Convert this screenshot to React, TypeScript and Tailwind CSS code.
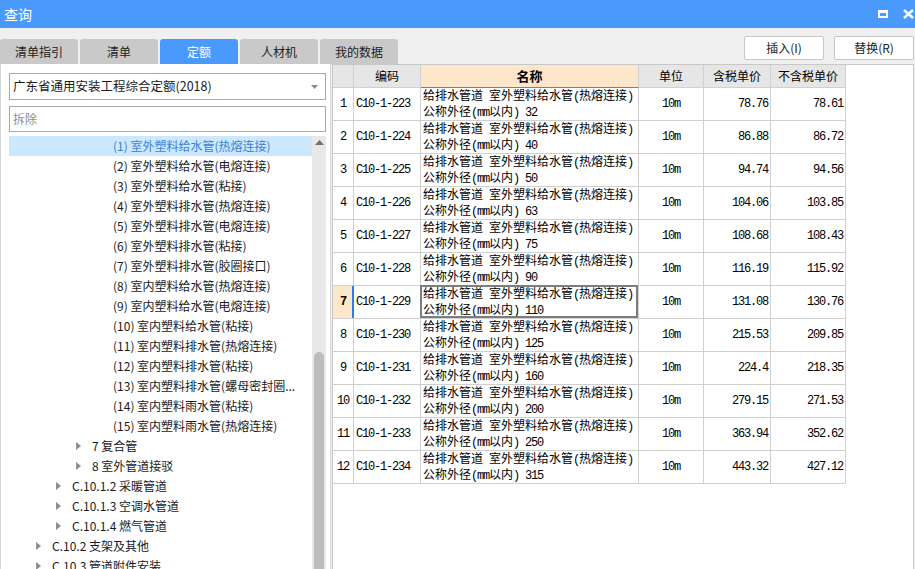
import React from "react";

const ui = "font-['Noto_Sans_CJK_SC',sans-serif]";
const mono = "font-['Liberation_Mono',monospace] tracking-[-1.2px]";

type Row = { code: string; size: string; tax: string; notax: string };

const rows: Row[] = [
  { code: "C10-1-223", size: "32", tax: "78.76", notax: "78.61" },
  { code: "C10-1-224", size: "40", tax: "86.88", notax: "86.72" },
  { code: "C10-1-225", size: "50", tax: "94.74", notax: "94.56" },
  { code: "C10-1-226", size: "63", tax: "104.06", notax: "103.85" },
  { code: "C10-1-227", size: "75", tax: "108.68", notax: "108.43" },
  { code: "C10-1-228", size: "90", tax: "116.19", notax: "115.92" },
  { code: "C10-1-229", size: "110", tax: "131.08", notax: "130.76" },
  { code: "C10-1-230", size: "125", tax: "215.53", notax: "209.85" },
  { code: "C10-1-231", size: "160", tax: "224.4", notax: "218.35" },
  { code: "C10-1-232", size: "200", tax: "279.15", notax: "271.53" },
  { code: "C10-1-233", size: "250", tax: "363.94", notax: "352.62" },
  { code: "C10-1-234", size: "315", tax: "443.32", notax: "427.12" },
];

type Node = { label: string; indent: string; arrow?: boolean };

const tree: Node[] = [
  { label: "(1) 室外塑料给水管(热熔连接)", indent: "pl-[104px]" },
  { label: "(2) 室外塑料给水管(电熔连接)", indent: "pl-[104px]" },
  { label: "(3) 室外塑料给水管(粘接)", indent: "pl-[104px]" },
  { label: "(4) 室外塑料排水管(热熔连接)", indent: "pl-[104px]" },
  { label: "(5) 室外塑料排水管(电熔连接)", indent: "pl-[104px]" },
  { label: "(6) 室外塑料排水管(粘接)", indent: "pl-[104px]" },
  { label: "(7) 室外塑料排水管(胶圈接口)", indent: "pl-[104px]" },
  { label: "(8) 室内塑料给水管(热熔连接)", indent: "pl-[104px]" },
  { label: "(9) 室内塑料给水管(电熔连接)", indent: "pl-[104px]" },
  { label: "(10) 室内塑料给水管(粘接)", indent: "pl-[104px]" },
  { label: "(11) 室内塑料排水管(热熔连接)", indent: "pl-[104px]" },
  { label: "(12) 室内塑料排水管(粘接)", indent: "pl-[104px]" },
  { label: "(13) 室内塑料排水管(螺母密封圈...", indent: "pl-[104px]" },
  { label: "(14) 室内塑料雨水管(粘接)", indent: "pl-[104px]" },
  { label: "(15) 室内塑料雨水管(热熔连接)", indent: "pl-[104px]" },
  { label: "7 复合管", indent: "pl-[67px]", arrow: true },
  { label: "8 室外管道接驳", indent: "pl-[67px]", arrow: true },
  { label: "C.10.1.2 采暖管道", indent: "pl-[47px]", arrow: true },
  { label: "C.10.1.3 空调水管道", indent: "pl-[47px]", arrow: true },
  { label: "C.10.1.4 燃气管道", indent: "pl-[47px]", arrow: true },
  { label: "C.10.2 支架及其他", indent: "pl-[27px]", arrow: true },
  { label: "C.10.3 管道附件安装", indent: "pl-[27px]", arrow: true },
];

const tabs = ["清单指引", "清单", "定额", "人材机", "我的数据"];

// ASCII runs get the narrow mono face, like the SimSun grid in the original
function Mixed({ text }: { text: string }) {
  const parts = text.split(/([\x00-\x7f]+)/).filter(Boolean);
  return (
    <>
      {parts.map((p, i) =>
        /^[\x00-\x7f]+$/.test(p) ? (
          <span key={i} className={`${mono} whitespace-pre`}>
            {p}
          </span>
        ) : (
          <span key={i}>{p}</span>
        )
      )}
    </>
  );
}

function Arrow() {
  return (
    <svg width="5" height="8" viewBox="0 0 5 8" className="shrink-0">
      <polygon points="0,0 5,4 0,8" fill="#8c8c8c" />
    </svg>
  );
}

export default function App() {
  return (
    <div className={`${ui} flex h-[569px] w-[915px] flex-col overflow-hidden bg-[#f0f0f0] text-[12px] text-[#1a1a1a]`}>
      {/* title bar */}
      <div className="flex h-[28px] shrink-0 items-center justify-between bg-[#4a9afd] pl-[4px] pr-[1px] text-white">
        <span className="text-[14px]">查询</span>
        <div className="flex items-center gap-[15px]">
          <div className="h-[8px] w-[10px] border-2 border-t-[3px] border-white" />
          <svg width="11" height="10" viewBox="0 0 11 10">
            <path d="M1 1 L10 9 M10 1 L1 9" stroke="white" strokeWidth="2.4" />
          </svg>
        </div>
      </div>

      {/* tabs + actions */}
      <div className="flex h-[36px] shrink-0 justify-between">
        <div className="flex items-end gap-[2px]">
          {tabs.map((t) => (
            <div
              key={t}
              className={`flex h-[25px] w-[78px] items-center justify-center rounded-t-[3px] ${
                t === "定额" ? "bg-[#4a9afd] text-white" : "bg-[#c9c9c9] text-[#222]"
              }`}
            >
              {t}
            </div>
          ))}
        </div>
        <div className="flex gap-[10px] pr-[1px] pt-[8px]">
          <button className="h-[24px] w-[80px] rounded-[2px] border border-[#c6c6c6] bg-white text-[#222]">插入(I)</button>
          <button className="h-[24px] w-[80px] rounded-[2px] border border-[#c6c6c6] bg-white text-[#222]">替换(R)</button>
        </div>
      </div>

      <div className="flex min-h-0 flex-1 gap-[1px]">
        {/* left panel */}
        <div className="flex w-[331px] shrink-0 flex-col border-x border-[#d6d6d6] bg-white pl-[8px] pr-[4px] pt-[9px]">
          <div className="flex h-[27px] items-center justify-between border border-[#a9a9a9] pl-[3px] pr-[7px]">
            <span className="text-[12.5px]">广东省通用安装工程综合定额(2018)</span>
            <svg width="7" height="4" viewBox="0 0 7 4">
              <polygon points="0,0 7,0 3.5,4" fill="#8a8a8a" />
            </svg>
          </div>
          <div className="mt-[6px] flex h-[26px] items-center border border-[#a9a9a9] pl-[3px] text-[#8c8c8c]">拆除</div>
          <div className="mt-[4px] flex min-h-0 flex-1">
            <div className="min-w-0 flex-1">
              {tree.map((n, i) => (
                <div
                  key={n.label}
                  className={`flex h-[20px] items-center whitespace-nowrap ${n.indent} ${
                    i === 0 ? "bg-[#cce8ff] text-[#3d80d0]" : ""
                  }`}
                >
                  {n.arrow && (
                    <span className="mr-[11px] flex">
                      <Arrow />
                    </span>
                  )}
                  {n.label}
                </div>
              ))}
            </div>
            {/* scrollbar */}
            <div className="flex w-[14px] shrink-0 flex-col items-center bg-[#e8e8e8]">
              <svg width="9" height="5" viewBox="0 0 9 5" className="mt-[4px]">
                <polygon points="0,5 9,5 4.5,0" fill="#707070" />
              </svg>
              <div className="mt-[207px] w-[10px] flex-1 rounded-t-[5px] bg-[#bdbdbd]" />
            </div>
          </div>
        </div>

        {/* right panel */}
        <div className="w-[582px] shrink-0 border-x border-t border-[#c8c8c8] bg-white">
          <div className="grid grid-cols-[21px_67px_218px_65px_67px_75px] text-black">
            <div className="h-[23px] border-b border-r border-[#d0d0d0] bg-[#e6e6e6]" />
            <div className="flex h-[23px] items-center justify-center border-b border-r border-[#d0d0d0] bg-[#e6e6e6]">编码</div>
            <div className="flex h-[23px] items-center justify-center border-b border-r border-[#d0d0d0] border-b-[#3b8cf5] bg-[#fde6c9] text-[13px] font-bold">名称</div>
            <div className="flex h-[23px] items-center justify-center border-b border-r border-[#d0d0d0] bg-[#e6e6e6]">单位</div>
            <div className="flex h-[23px] items-center justify-center border-b border-r border-[#d0d0d0] bg-[#e6e6e6]">含税单价</div>
            <div className="flex h-[23px] items-center justify-center border-b border-r border-[#d0d0d0] bg-[#e6e6e6]">不含税单价</div>

            {rows.map((r, i) => {
              const cur = i === 6;
              return (
                <React.Fragment key={r.code}>
                  <div
                    className={`flex h-[33px] items-center justify-center border-b border-r border-[#d0d0d0] ${
                      cur ? "bg-[#fde6c9] font-bold" : ""
                    }`}
                  >
                    <Mixed text={String(i + 1)} />
                  </div>
                  <div className="relative flex h-[33px] items-center border-b border-r border-[#d0d0d0] pl-[2px]">
                    {cur && <div className="absolute -left-[2px] top-0 h-full w-[2px] bg-[#2a7bf2]" />}
                    <Mixed text={r.code} />
                  </div>
                  <div className="relative flex h-[33px] flex-col justify-center border-b border-r border-[#d0d0d0] pl-[2px] leading-[14px]">
                    {cur && <div className="absolute -left-[1px] -top-[1px] bottom-0 right-0 border-2 border-[#7d7d7d]" />}
                    <div className="whitespace-nowrap">
                      <Mixed text="给排水管道 室外塑料给水管(热熔连接)" />
                    </div>
                    <div className="whitespace-nowrap">
                      <Mixed text={`公称外径(mm以内) ${r.size}`} />
                    </div>
                  </div>
                  <div className="flex h-[33px] items-center justify-center border-b border-r border-[#d0d0d0]">
                    <Mixed text="10m" />
                  </div>
                  <div className="flex h-[33px] items-center justify-end border-b border-r border-[#d0d0d0] pr-[2px]">
                    <Mixed text={r.tax} />
                  </div>
                  <div className="flex h-[33px] items-center justify-end border-b border-r border-[#d0d0d0] pr-[2px]">
                    <Mixed text={r.notax} />
                  </div>
                </React.Fragment>
              );
            })}
          </div>
        </div>
      </div>
    </div>
  );
}
